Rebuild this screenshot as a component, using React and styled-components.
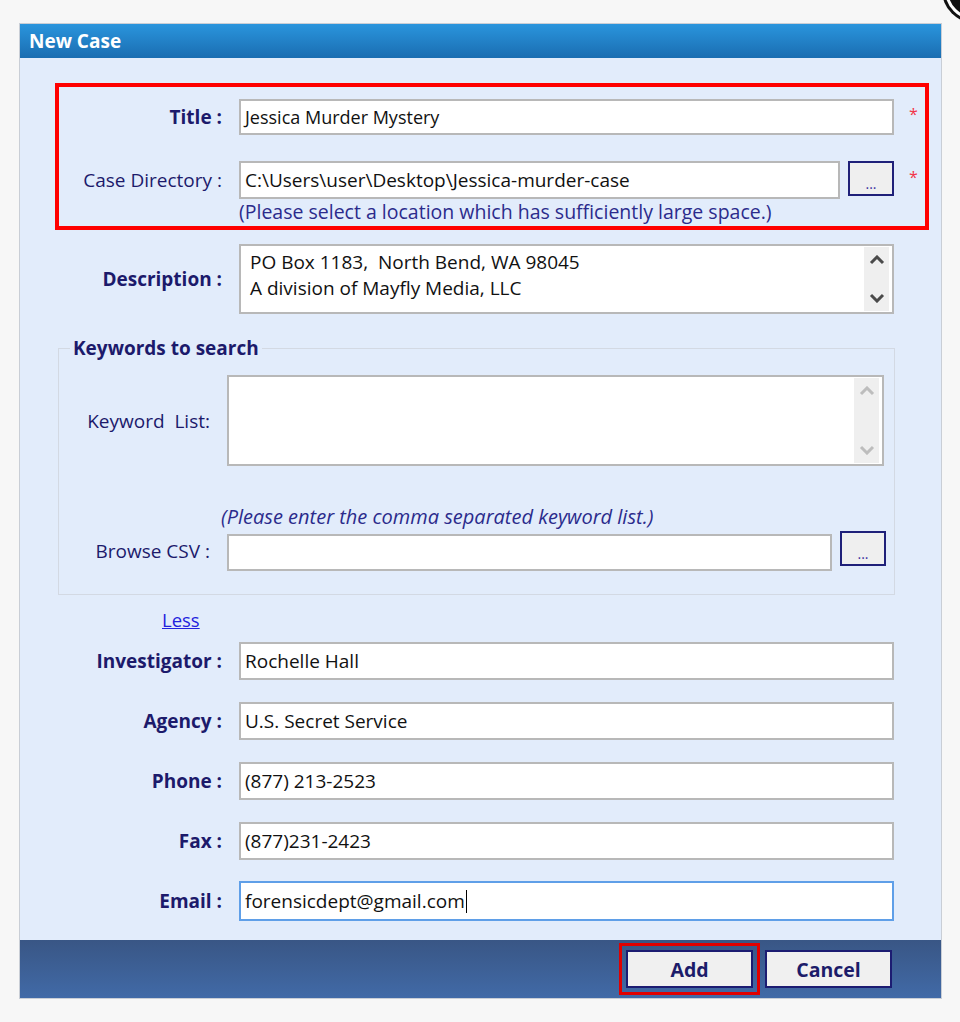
import React from 'react';
import styled, { createGlobalStyle } from 'styled-components';

const GlobalStyle = createGlobalStyle`
  html, body {
    margin: 0;
    background: #f7f7f7;
    overflow: hidden;
  }
  body {
    font-family: "Open Sans", "Liberation Sans", sans-serif;
  }
`;

const Page = styled.div`
  position: relative;
  height: 1022px;
  padding: 23px 0 0 19px;
  box-sizing: border-box;
  overflow: hidden;
`;

const CloseBadge = styled.div`
  position: absolute;
  left: 945px;
  top: -40px;
  width: 54px;
  height: 54px;
  border-radius: 50%;
  background: #111;
  border: 3px solid #fff;
  box-shadow: 0 0 0 3px #111;
`;

const Dialog = styled.div`
  width: 923px;
  border: 1px solid #c9ced6;
  box-sizing: border-box;
  background: #e2ecfb;
`;

const TitleBar = styled.div`
  height: 34px;
  display: flex;
  align-items: center;
  padding-left: 9px;
  background: linear-gradient(#2a95dd, #1a6db1);
  color: #fff;
  font-size: 19px;
  font-weight: 700;
`;

const Body = styled.div`
  padding: 25px 0 19px 0;
`;

const RequiredBox = styled.div`
  margin-left: 35px;
  width: 874px;
  box-sizing: border-box;
  border: 4px solid #ff0000;
  padding: 12px 0 2px;
  display: grid;
  grid-template-columns: 180px 655px 1fr;
  align-items: center;
`;

const Row = styled.div`
  display: grid;
  grid-template-columns: ${p => p.$label || 219}px ${p => p.$field || 655}px;
  align-items: center;
  margin-top: ${p => p.$top || 0}px;
`;

const Label = styled.div`
  text-align: right;
  padding-right: 17px;
  color: #1c1a6b;
  font-size: 19px;
  font-weight: ${p => (p.$bold ? 700 : 400)};
  white-space: nowrap;
`;

const Input = styled.div`
  height: ${p => p.$h || 38}px;
  box-sizing: border-box;
  border: 2px solid ${p => (p.$focus ? '#5f9fe8' : '#b8b8b8')};
  background: #fff;
  padding: 0 4px;
  display: flex;
  align-items: center;
  font-size: ${p => p.$size || 19}px;
  color: #111;
  white-space: nowrap;
  flex: 1;
  min-width: 0;
`;

const Caret = styled.span`
  display: inline-block;
  width: 1px;
  height: 23px;
  background: #000;
  margin-left: 1px;
`;

const FieldGroup = styled.div`
  display: flex;
  align-items: flex-start;
  gap: 8px;
`;

const BrowseButton = styled.button`
  width: 46px;
  height: 35px;
  margin-top: ${p => p.$shift || 0}px;
  box-sizing: border-box;
  border: 2px solid #1f2079;
  background: #efefef;
  color: #3b2fa0;
  font-family: inherit;
  font-size: 14px;
  line-height: 1;
  padding: 10px 0 0;
  cursor: pointer;
`;

const Star = styled.span`
  color: #f23447;
  font-size: 16px;
  text-align: center;
  padding-left: 8px;
  align-self: center;
  margin-top: -6px;
`;

const Hint = styled.div`
  grid-column: 2 / 4;
  color: #2b2b8c;
  font-size: ${p => (p.$italic ? 20 : 19.5)}px;
  line-height: 25px;
  white-space: nowrap;
  font-style: ${p => (p.$italic ? 'italic' : 'normal')};
  margin-left: ${p => p.$shift || 0}px;
`;

const TextBox = styled.div`
  height: ${p => p.$h}px;
  box-sizing: border-box;
  border: 2px solid #b8b8b8;
  background: #fff;
  display: flex;
  font-size: 19px;
  color: #111;
`;

const TextContent = styled.div`
  flex: 1;
  padding: 3px 9px;
  line-height: 26px;
  white-space: nowrap;
`;

const ScrollStrip = styled.div`
  width: 25px;
  margin: 1px 3px 1px 0;
  background: #efefef;
  display: flex;
  flex-direction: column;
  justify-content: space-between;
  align-items: center;
  padding: 8px 0;
  color: ${p => (p.$disabled ? '#bdbdbd' : '#4a4a4a')};
`;

const Fieldset = styled.fieldset`
  margin: 22px 0 0 38px;
  width: 837px;
  box-sizing: border-box;
  border: 1px solid #d3d9e3;
  padding: 0 0 23px 0;
`;

const Legend = styled.legend`
  margin-left: 11px;
  padding: 0 3px;
  color: #1c1a6b;
  font-size: 19px;
  font-weight: 700;
  line-height: 24px;
`;

const LessLink = styled.a`
  display: block;
  width: max-content;
  margin: 14px 0 11px 142px;
  color: #2222dd;
  text-decoration: underline;
  font-size: 18.5px;
  line-height: 22px;
  cursor: pointer;
`;

const Footer = styled.div`
  height: 58px;
  display: flex;
  align-items: center;
  justify-content: flex-end;
  gap: 12px;
  padding-right: 49px;
  background: linear-gradient(#395685, #416aa7);
`;

const ActionButton = styled.button`
  width: 127px;
  height: 38px;
  box-sizing: border-box;
  border: 2px solid #1c1c72;
  background: #f0f0f0;
  color: #1c1c6a;
  font-family: inherit;
  font-size: 19.5px;
  font-weight: 700;
  cursor: pointer;
  outline: ${p => (p.$marked ? '3px solid #e00000' : 'none')};
  outline-offset: 4px;
`;

function Chevron({ up }) {
  return (
    <svg width="16" height="10" viewBox="0 0 16 10">
      <path
        d={up ? 'M2 8 L8 2 L14 8' : 'M2 2 L8 8 L14 2'}
        fill="none"
        stroke="currentColor"
        strokeWidth="3"
      />
    </svg>
  );
}

const details = [
  { label: 'Investigator :', value: 'Rochelle Hall' },
  { label: 'Agency :', value: 'U.S. Secret Service' },
  { label: 'Phone :', value: '(877) 213-2523' },
  { label: 'Fax :', value: '(877)231-2423' },
];

export default function App() {
  return (
    <Page>
      <GlobalStyle />
      <CloseBadge />
      <Dialog>
        <TitleBar>New Case</TitleBar>
        <Body>
          <RequiredBox>
            <Label $bold>Title :</Label>
            <Input $h={36} $size={18}>Jessica Murder Mystery</Input>
            <Star>*</Star>

            <Label style={{ marginTop: 26 }}>Case Directory :</Label>
            <FieldGroup style={{ marginTop: 26 }}>
              <Input $h={38}>C:\Users\user\Desktop\Jessica-murder-case</Input>
              <BrowseButton>...</BrowseButton>
            </FieldGroup>
            <Star style={{ marginTop: 20 }}>*</Star>
            <Hint>(Please select a location which has sufficiently large space.)</Hint>
          </RequiredBox>

          <Row $top={14}>
            <Label $bold>Description :</Label>
            <TextBox $h={70}>
              <TextContent>
                PO Box 1183,&nbsp; North Bend, WA 98045
                <br />
                A division of Mayfly Media, LLC
              </TextContent>
              <ScrollStrip>
                <Chevron up />
                <Chevron />
              </ScrollStrip>
            </TextBox>
          </Row>

          <Fieldset>
            <Legend>Keywords to search</Legend>
            <Row $label={168} $field={657} $top={15}>
              <Label>Keyword&nbsp; List:</Label>
              <TextBox $h={91}>
                <TextContent />
                <ScrollStrip $disabled>
                  <Chevron up />
                  <Chevron />
                </ScrollStrip>
              </TextBox>
            </Row>
            <Row $label={168} $field={659} $top={38}>
              <span />
              <Hint $italic $shift={-6}>(Please enter the comma separated keyword list.)</Hint>
            </Row>
            <Row $label={168} $field={659} $top={2}>
              <Label>Browse CSV :</Label>
              <FieldGroup>
                <Input $h={37} style={{ marginTop: 3 }}>&nbsp;</Input>
                <BrowseButton>...</BrowseButton>
              </FieldGroup>
            </Row>
          </Fieldset>

          <LessLink>Less</LessLink>

          {details.map((d, i) => (
            <Row key={d.label} $top={i === 0 ? 0 : 22}>
              <Label $bold>{d.label}</Label>
              <Input>{d.value}</Input>
            </Row>
          ))}
          <Row $top={21}>
            <Label $bold>Email :</Label>
            <Input $h={40} $focus>
              forensicdept@gmail.com
              <Caret />
            </Input>
          </Row>
        </Body>
        <Footer>
          <ActionButton $marked>Add</ActionButton>
          <ActionButton>Cancel</ActionButton>
        </Footer>
      </Dialog>
    </Page>
  );
}
